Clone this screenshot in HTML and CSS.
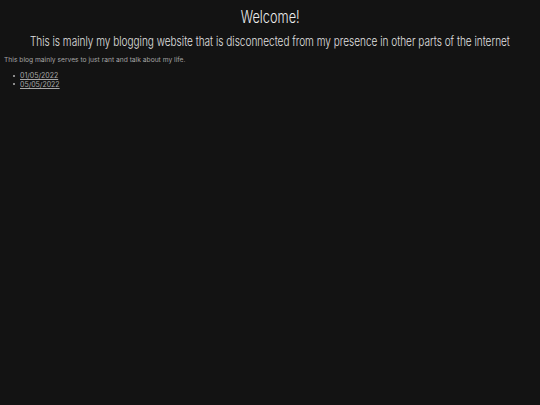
FILE: index.html
```html
<!DOCTYPE html>
<html lang="en">
<head>
<meta charset="utf-8">
<title>Welcome</title>
<link rel="stylesheet" href="styles.css">
</head>
<body class="page">
<header class="head">
<h1 class="title">Welcome!</h1>
<h2 class="subtitle">This is mainly my blogging website that is disconnected from my presence in other parts of the internet</h2>
</header>
<p class="intro">This blog mainly serves to just rant and talk about my life.</p>
<ul class="posts">
<li class="post"><a class="post-link" href="#">01/05/2022</a></li>
<li class="post"><a class="post-link" href="#">05/05/2022</a></li>
</ul>
</body>
</html>
```
FILE: styles.css
```css
html { background: #131313; }
.page {
  margin: 0;
  padding: 0 4px;
  background: #131313;
  color: #e6e6e6;
  font-family: Inter, "Noto Sans", sans-serif;
  overflow: hidden;
}
.head {
  display: flex;
  flex-direction: column;
  align-items: center;
}
.title {
  font-size: 17px;
  font-weight: 300;
  margin: 0;
  padding-top: 7px;
  line-height: 20px;
  transform: scaleX(0.75);
  white-space: nowrap;
  color: #ececec;
}
.subtitle {
  font-size: 13.3px;
  font-weight: 300;
  margin: 5.8px 0 0;
  line-height: 16px;
  transform: scaleX(0.755);
  white-space: nowrap;
  color: #e2e2e2;
}
.intro {
  font-size: 6.7px;
  color: #a4a4a4;
  margin: 7.5px 0 0;
  line-height: 9px;
}
.posts {
  font-size: 7px;
  line-height: 8.7px;
  margin: 6.8px 0 0;
  padding-left: 16px;
  list-style: none;
}
.post::before {
  content: "";
  display: inline-block;
  width: 2px;
  height: 2px;
  background: #b4b4b4;
  border-radius: 1px;
  margin: 0 5px 1px -7px;
  vertical-align: middle;
}
.post-link { color: #a8a8a8; }
```
